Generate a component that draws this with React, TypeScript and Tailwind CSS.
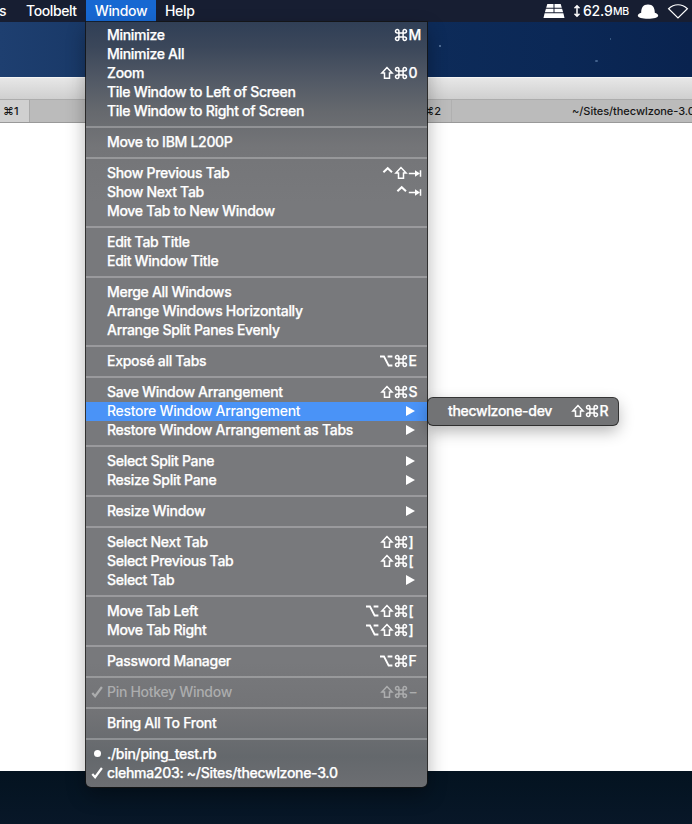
import React from "react";

type Item = {
  label: string;
  keys?: string[];
  sub?: boolean;
  active?: boolean;
  disabled?: boolean;
  mark?: "check" | "dot";
};

const groups: Item[][] = [
  [
    { label: "Minimize", keys: ["⌘", "M"] },
    { label: "Minimize All" },
    { label: "Zoom", keys: ["⇧", "⌘", "0"] },
    { label: "Tile Window to Left of Screen" },
    { label: "Tile Window to Right of Screen" },
  ],
  [{ label: "Move to IBM L200P" }],
  [
    { label: "Show Previous Tab", keys: ["⌃", "⇧", "⇥"] },
    { label: "Show Next Tab", keys: ["⌃", "⇥"] },
    { label: "Move Tab to New Window" },
  ],
  [{ label: "Edit Tab Title" }, { label: "Edit Window Title" }],
  [
    { label: "Merge All Windows" },
    { label: "Arrange Windows Horizontally" },
    { label: "Arrange Split Panes Evenly" },
  ],
  [{ label: "Exposé all Tabs", keys: ["⌥", "⌘", "E"] }],
  [
    { label: "Save Window Arrangement", keys: ["⇧", "⌘", "S"] },
    { label: "Restore Window Arrangement", sub: true, active: true },
    { label: "Restore Window Arrangement as Tabs", sub: true },
  ],
  [
    { label: "Select Split Pane", sub: true },
    { label: "Resize Split Pane", sub: true },
  ],
  [{ label: "Resize Window", sub: true }],
  [
    { label: "Select Next Tab", keys: ["⇧", "⌘", "]"] },
    { label: "Select Previous Tab", keys: ["⇧", "⌘", "["] },
    { label: "Select Tab", sub: true },
  ],
  [
    { label: "Move Tab Left", keys: ["⌥", "⇧", "⌘", "["] },
    { label: "Move Tab Right", keys: ["⌥", "⇧", "⌘", "]"] },
  ],
  [{ label: "Password Manager", keys: ["⌥", "⌘", "F"] }],
  [{ label: "Pin Hotkey Window", keys: ["⇧", "⌘", "−"], disabled: true, mark: "check" }],
  [{ label: "Bring All To Front" }],
  [
    { label: "./bin/ping_test.rb", mark: "dot" },
    { label: "clehma203: ~/Sites/thecwlzone-3.0", mark: "check" },
  ],
];

const glyphs: Record<string, React.ReactNode> = {
  "⌘": (
    <path d="M4.9 4.9V3.3a1.7 1.7 0 1 0-1.7 1.6h7.6a1.7 1.7 0 1 0-1.7-1.6v7.4a1.7 1.7 0 1 0 1.7-1.6H3.2a1.7 1.7 0 1 0 1.7 1.6Z" />
  ),
  "⇧": <path d="M7 1.6 1.9 7.1h2.6v5.2h5V7.1h2.6Z" />,
  "⌥": <path d="M0 2.5h4L8.600 11.500H12.400M7.600 2.500H12.400" strokeWidth="1.8" />,
  "⌃": <path d="M3.400 6.200 7.700 2.200l4.300 4" strokeWidth="2" />,
  "⇥": (
    <>
      <path d="M.8 7.500h8M12.500 4.200v6.600" />
      <path d="M7 4.200v6.600l5-3.300Z" fill="currentColor" stroke="none" />
    </>
  ),
};

function Key({ symbol }: { symbol: string }) {
  const glyph = glyphs[symbol];
  if (!glyph) return <span className="w-[19px] pl-[0.5px]">{symbol}</span>;
  return (
    <svg
      viewBox="0 0 14 14"
      className={`h-3.5 w-3.5 shrink-0 ${symbol === "⇥" ? "mr-[5px]" : ""}`}
      fill="none"
      stroke="currentColor"
      strokeWidth="1.5"
    >
      {glyph}
    </svg>
  );
}

function Mark({ kind }: { kind?: "check" | "dot" }) {
  return (
    <span className="flex w-[21px] shrink-0 items-center pl-[5px]">
      {kind === "check" && (
        <svg viewBox="0 0 12 12" className="h-3 w-3" fill="none" stroke="currentColor" strokeWidth="2.2">
          <path d="m1.300 7 2.800 3.200L10.900 1" />
        </svg>
      )}
      {kind === "dot" && <span className="ml-[3px] h-[7px] w-[7px] rounded-full bg-current" />}
    </span>
  );
}

function Row({ item }: { item: Item }) {
  const tone = item.active ? "bg-[#4a93f7]" : "";
  const ink = item.disabled ? "text-[#acadae]" : "text-white";
  const weight = item.active || item.disabled ? "" : "[-webkit-text-stroke:0.25px_currentColor]";
  return (
    <div className={`flex h-[19px] items-center pb-[2px] whitespace-nowrap ${tone} ${ink} ${weight}`}>
      <Mark kind={item.mark} />
      <span className="flex-1">{item.label}</span>
      {item.keys && (
        <span className="flex items-center">
          {item.keys.map((k) => (
            <Key key={k} symbol={k} />
          ))}
        </span>
      )}
      {item.sub && (
        <svg viewBox="0 0 9 10" className="mr-3 h-2.5 w-[9px]" fill="currentColor">
          <path d="M0 0v10L9 5Z" />
        </svg>
      )}
    </div>
  );
}

function Menu() {
  return (
    <div className="absolute top-[22px] left-[86px] z-10 w-[341px] rounded-b-[5px] bg-[linear-gradient(180deg,#303f56_0px,#3b475a_25px,#535a66_60px,#66696e_90px,#747578_125px,#78797c_180px,#78797c_640px,#727376_690px,#64686c_735px,#6c6e72_765px)] py-1 shadow-[0_0_0_1px_rgba(20,20,20,0.85),0_8px_20px_rgba(0,0,0,0.32)]">
      {groups.map((group, i) => (
        <React.Fragment key={group[0].label}>
          {i > 0 && (
            <div className="flex h-3 items-center">
              <div className="h-0.5 w-full bg-white/25" />
            </div>
          )}
          {group.map((item) => (
            <Row key={item.label} item={item} />
          ))}
        </React.Fragment>
      ))}
    </div>
  );
}

function Submenu() {
  return (
    <div className="absolute top-[398px] left-[428px] z-20 flex h-[27px] w-[190px] items-center rounded-[5px] bg-[#727375] pb-[2px] pl-5 text-white shadow-[0_0_0_1px_rgba(20,20,20,0.85),0_6px_16px_rgba(0,0,0,0.3)] [-webkit-text-stroke:0.25px_currentColor]">
      <span className="flex-1">thecwlzone-dev</span>
      <span className="flex items-center">
        <Key symbol="⇧" />
        <Key symbol="⌘" />
        <Key symbol="R" />
      </span>
    </div>
  );
}

function MenuBar() {
  return (
    <div className="flex h-[22px] items-center whitespace-nowrap bg-[#171e32] text-white">
      <span className="w-[26px] -indent-px">s</span>
      <span className="w-[60px] tracking-[-0.4px]">Toolbelt</span>
      <span className="flex h-full w-[70px] items-center justify-center bg-[#1768d2]">Window</span>
      <span className="pl-[9px]">Help</span>
      <span className="flex-1" />
      <svg viewBox="0 0 22 14" className="h-3.5 w-[22px]" fill="currentColor">
        <path d="M4.3 0h6.2v3.7H3.2ZM11.500 0h6.2l1.100 3.700h-7.300ZM2.900 4.700h7.600v3.500H1.900ZM11.500 4.700h7.600l1 3.500h-8.600ZM1.600 9.200h18.800l1.100 4.800H.5Z" />
      </svg>
      <svg viewBox="0 0 8 14" className="ml-2 h-3.5 w-2" fill="none" stroke="currentColor" strokeWidth="1.5">
        <path d="M4 1.800v10.400M1.500 4.200 4 1.700l2.500 2.500M1.500 9.800 4 12.300l2.500-2.500" />
      </svg>
      <span className="ml-[2px] w-[30px] tracking-[-0.2px]">62.9</span>
      <span className="w-[24px] pt-[2px] text-[10.500px] tracking-[-0.4px]">MB</span>
      <svg viewBox="0 0 22 15" className="h-[15px] w-[22px]" fill="currentColor">
        <path d="M4.200 8.800C4.200 3.600 6 .4 11 .4s6.800 3.200 6.800 8.400c2 .8 3.400 1.700 3.400 3 0 1.700-4.600 3-10.200 3S.8 13.500.8 11.800c0-1.300 1.400-2.200 3.400-3Z" />
      </svg>
      <svg viewBox="0 0 22 16" className="mr-[3px] ml-2 h-4 w-[22px]" fill="none" stroke="currentColor" strokeWidth="1.2">
        <path d="M1.600 5.700C7 .4 15 .4 20.400 5.700L11 15Z" />
      </svg>
    </div>
  );
}

export default function App() {
  return (
    <div className="relative flex h-[824px] w-[692px] flex-col overflow-hidden font-['Inter','DejaVu_Sans',sans-serif] text-[14px] leading-none font-medium tracking-[-0.3px]">
      <MenuBar />
      <div className="h-[55px] bg-[linear-gradient(90deg,#1e3f70_0px,#193968_86px,#0d2b59_430px,#0b2856_560px,#09234f_692px)]">
        <div className="flex h-full items-start">
          <span className="mt-[23px] ml-[439px] h-0.5 w-0.5 rounded-full bg-[#6483aa]" />
          <span className="mt-[38px] ml-[154px] h-0.5 w-[3px] rounded-full bg-[#42618c]" />
          <span className="mt-4 ml-3 h-0.5 w-px bg-[#365780]" />
        </div>
      </div>
      <div className="flex h-[694px] flex-col bg-white">
        <div className="h-[22px] border-t border-[#f5f5f5] bg-linear-to-b from-[#e7e7e7] to-[#cfcfcf]" />
        <div className="flex h-6 items-center border-y border-t-[#acacac] border-b-[#999] bg-[#bbb] text-[11px] tracking-normal text-[#161616]">
          <div className="flex h-full w-[30px] shrink-0 items-center border-r border-[#aaa] bg-[#d0d0d0] pl-[3px]">⌘1</div>
          <div className="flex h-full w-[422px] shrink-0 items-center justify-end border-r border-[#b0b0b0] pr-[10px]">⌘2</div>
          <div className="shrink-0 pl-[120px] tracking-[-0.04px] whitespace-nowrap">~/Sites/thecwlzone-3.0</div>
        </div>
      </div>
      <div className="flex-1 bg-linear-to-b from-[#041320] to-[#081728]" />
      <Menu />
      <Submenu />
    </div>
  );
}
